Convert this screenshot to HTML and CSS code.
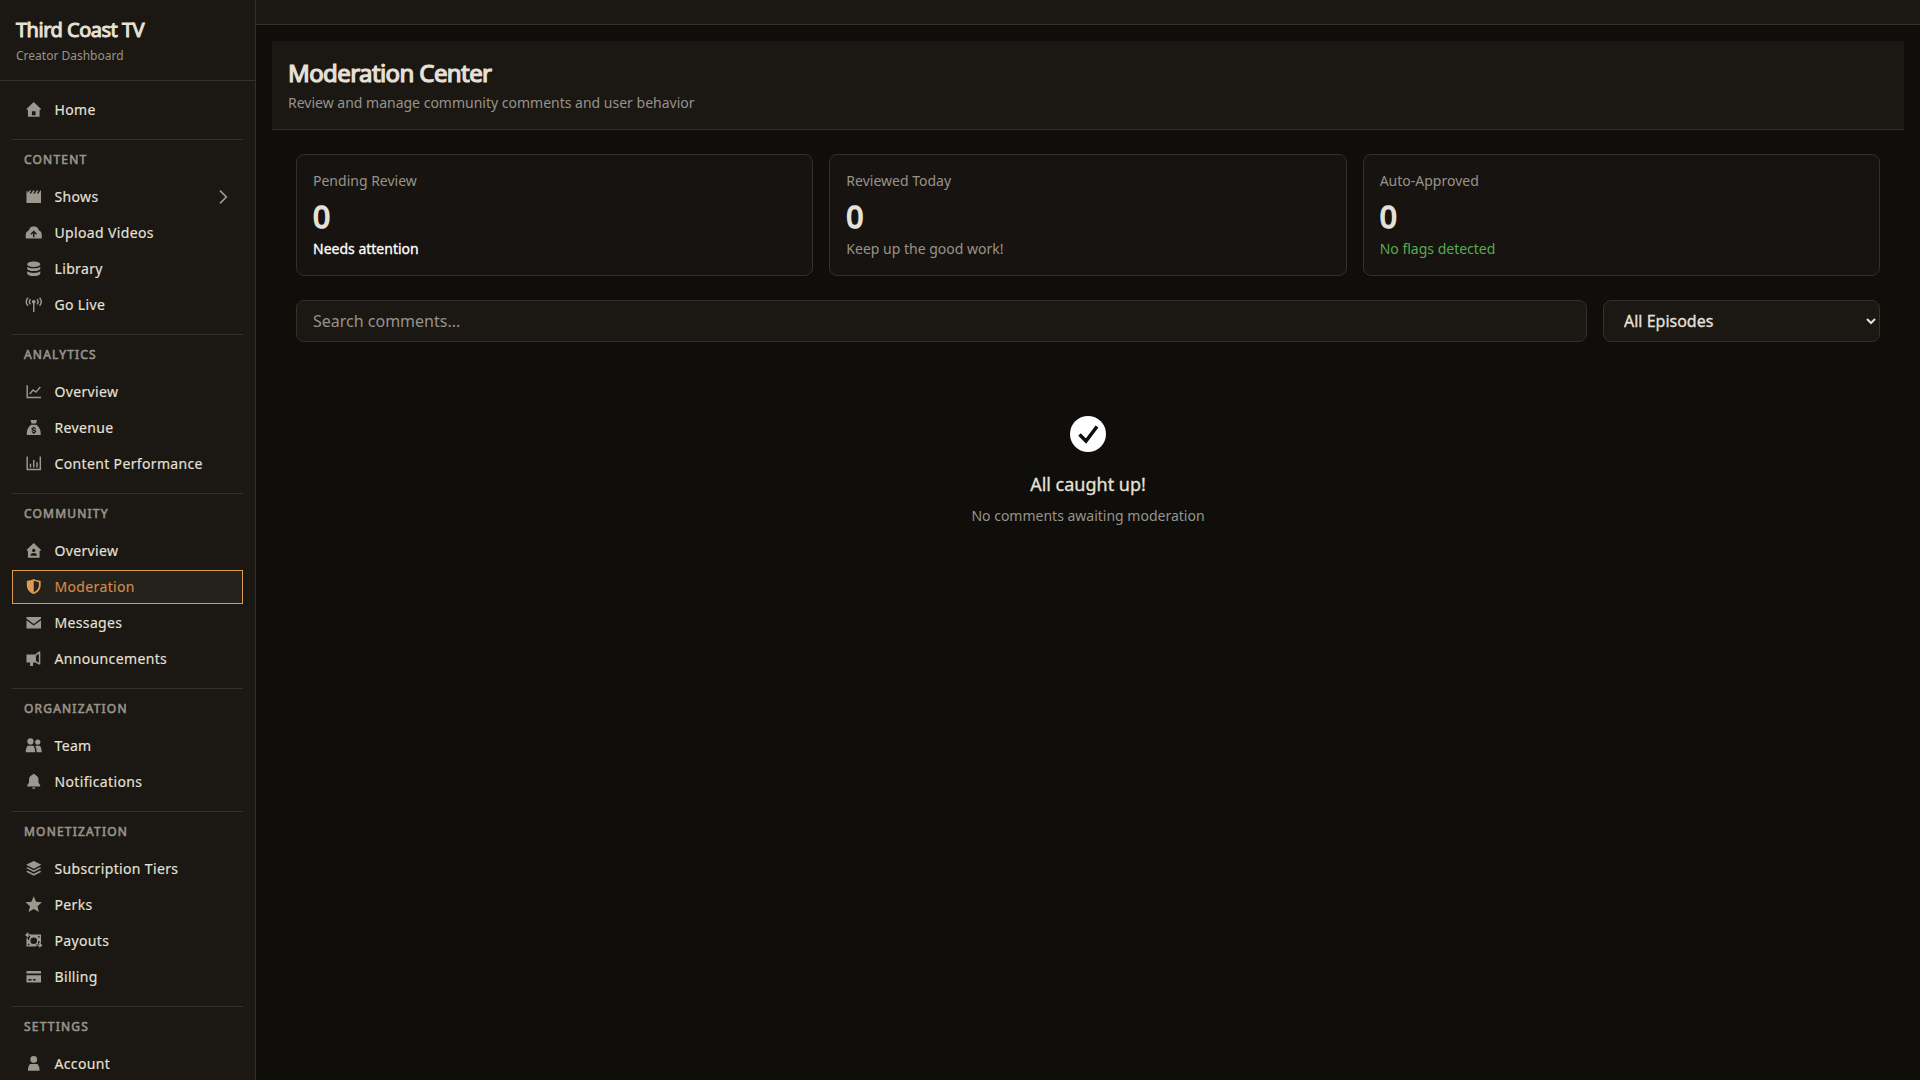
FILE: index.html
```html
<!DOCTYPE html>
<html lang="en">

<head>
    <meta charset="UTF-8">
    <title>Moderation Center - Third Coast TV</title>
    <link rel="stylesheet" href="styles.css">
</head>

<body>
    <aside class="sidebar">
        <header class="brand">
            <h2>Third Coast TV</h2>
            <p>Creator Dashboard</p>
        </header>

        <nav>
            <section class="group">
                <a href="#" class="item">
                    <svg viewBox="0 0 24 24"><path fill-rule="evenodd" d="M12 1.500 22 11l-1.200 1.300-.8-.6V21.500H4v-9.800l-.8.600L2 11ZM9.500 14v5.500h5V14Z"/></svg>
                    Home</a>
            </section>

            <section class="group">
                <h3>Content</h3>
                <a href="#" class="item">
                    <svg viewBox="0 0 24 24"><path d="M2 4.500h1.500V7L6 3.500h2.500L6.200 7.500h2.300L11 3.500h2.500l-2.300 4h2.300L16 3.500h2.500l-2.300 4h2.300L21 3.500h1V20.500H2Z"/></svg>
                    Shows
                    <svg class="chevron" viewBox="0 0 24 24"><path d="m7.500 2.500 9.500 9.500-9.500 9.500"/></svg>
                </a>
                <a href="#" class="item">
                    <svg viewBox="0 0 24 24"><path fill-rule="evenodd" d="M7 5c2-2.200 8-2.200 10.200 0l2 4C21.500 9.800 23 12 23 15v5H1v-5c0-3 1.500-5 4-6Zm5 4-4.500 4.500 1.200 1.200 2.300-2V18h2v-5.300l2.300 2 1.200-1.200Z"/></svg>
                    Upload Videos</a>
                <a href="#" class="item">
                    <svg viewBox="0 0 24 24"><path d="M12 2c5 0 9 1.800 9 3.800S17 9.600 12 9.600 3 7.800 3 5.800 7 2 12 2ZM3 9.200c2 1.600 5.400 2.200 9 2.200s7-.6 9-2.200v2.400c0 2-4 3.600-9 3.600s-9-1.600-9-3.600ZM3 15.500c2 1.600 5.400 2.200 9 2.200s7-.6 9-2.200V18c0 2.200-4 4-9 4s-9-1.800-9-4Z"/></svg>
                    Library</a>
                <a href="#" class="item">
                    <svg viewBox="0 0 24 24"><path d="M12 5.500a2.500 2.500 0 0 1 1 4.800V22h-2V10.300a2.500 2.500 0 0 1 1-4.800Z"/><path class="line" d="M4 2.500c-2.700 3.200-2.700 7.800 0 11M20 2.500c2.700 3.200 2.700 7.800 0 11M7.500 4.500c-1.700 2-1.700 5 0 7M16.500 4.500c1.700 2 1.700 5 0 7"/></svg>
                    Go Live</a>
            </section>

            <section class="group">
                <h3>Analytics</h3>
                <a href="#" class="item">
                    <svg viewBox="0 0 24 24"><path class="line" d="M3 3v17h19M6.500 15l4.500-5.500 4 3 6-7"/></svg>
                    Overview</a>
                <a href="#" class="item">
                    <svg viewBox="0 0 24 24"><path fill-rule="evenodd" d="M7.500 1.500h9L15 6.200H9ZM8.500 8h7c3.500 2.500 6 6.500 6 10.500V22h-19v-3.500c0-4 2.500-8 6-10.500Zm2.700 2.500v1.200c-3 .4-3.200 3.800-.2 4.300l1.800.4c.9.300.7 1.300-.4 1.300-1 0-1.600-.3-1.700-1H9c.1 1.400.9 2.200 2.200 2.500v1.200h1.600v-1.200c3.200-.5 3.400-3.900.3-4.500l-1.700-.4c-.9-.3-.6-1.200.5-1.200.8 0 1.300.3 1.500.9h1.600c-.2-1.200-1-2-2.200-2.300v-1.200Z"/></svg>
                    Revenue</a>
                <a href="#" class="item">
                    <svg viewBox="0 0 24 24"><path class="line" d="M3 2v18h18V2M7.500 17v-5M12 17V7M16.500 17v-7"/></svg>
                    Content Performance</a>
            </section>

            <section class="group">
                <h3>Community</h3>
                <a href="#" class="item">
                    <svg viewBox="0 0 24 24"><path fill-rule="evenodd" d="M12 1.500 22 11l-1.200 1.300-.8-.6V21.500H4v-9.800l-.8.600L2 11ZM12 9.200a2.300 2.300 0 1 0 0 4.600 2.300 2.300 0 0 0 0-4.600ZM7.500 19h9c0-2.400-1.500-4-4.500-4s-4.500 1.600-4.500 4Z"/></svg>
                    Overview</a>
                <a href="#" class="item valgt">
                    <svg viewBox="0 0 24 24"><path fill-rule="evenodd" d="M12 1.500c3 1.500 6 2.200 9.500 2.500v6c0 6-4 10-9.500 12-5.500-2-9.500-6-9.500-12V4C6 3.700 9 3 12 1.500Zm0 2.400v15.600c4.300-1.700 7-5 7-9.100V5.900C16.500 5.500 14.200 4.800 12 3.900Z"/></svg>
                    Moderation</a>
                <a href="#" class="item">
                    <svg viewBox="0 0 24 24"><path d="M2 4h20v2.300l-10 7.400L2 6.300Zm0 4.500 10 7.300 10-7.300V20H2Z"/></svg>
                    Messages</a>
                <a href="#" class="item">
                    <svg viewBox="0 0 24 24"><path fill-rule="evenodd" d="M21 2v18h-2l-5-3h-3v5H7v-5H2V6h12l5-4Zm-2 3.200-4 2.600v7.400l4 2.300Z"/></svg>
                    Announcements</a>
            </section>

            <section class="group">
                <h3>Organization</h3>
                <a href="#" class="item">
                    <svg viewBox="0 0 24 24"><circle cx="7.500" cy="6" r="4.300"/><circle cx="17.500" cy="7" r="3.600"/><path d="M3.500 12h8c1.500 1.800 2.500 5 2.500 9H1c0-4 1-7.200 2.500-9ZM14 12h6.500c1.500 1.800 2.500 5 2.500 9h-7c0-3.800-.7-6.500-2-9Z"/></svg>
                    Team</a>
                <a href="#" class="item">
                    <svg viewBox="0 0 24 24"><path d="M12 1c.8 0 1.400.5 1.500 1.300 3 .7 5 3.400 5 6.700v4c1 1.700 2.500 3 2.500 5.500H3c0-2.500 1.500-3.800 2.500-5.500V9c0-3.300 2-6 5-6.700C10.600 1.500 11.200 1 12 1ZM9.500 20h5c-.3 1.200-1.300 2-2.500 2s-2.200-.8-2.500-2Z"/></svg>
                    Notifications</a>
            </section>

            <section class="group">
                <h3>Monetization</h3>
                <a href="#" class="item">
                    <svg viewBox="0 0 24 24"><path d="m12 1.500 10.500 5L12 12 1.500 6.500ZM1.500 11l2.200-1.200L12 14l8.300-4.200 2.200 1.200L12 16.500Zm0 5 2.200-1.200L12 19l8.300-4.200L22.500 16 12 21.500Z"/></svg>
                    Subscription Tiers</a>
                <a href="#" class="item">
                    <svg viewBox="0 0 24 24"><path d="m12 .5 3.200 7.500 8 .7-6 5.300L19 22l-7-4.200L5 22l1.800-8-6-5.300 8-.7Z"/></svg>
                    Perks</a>
                <a href="#" class="item">
                    <svg viewBox="0 0 24 24"><path fill-rule="evenodd" d="M7 3.500h15V15h-2v-2.500h-1.500a6 6 0 0 0-.5 4h-3V20H2V8.500h2V11h1.500A6 6 0 0 0 6 7.500h1ZM12 7.500a4.500 4.500 0 1 0 0 9 4.500 4.500 0 0 0 0-9ZM18 5.500v2h2v-2ZM4 16v2h2v-2Z"/><path class="line" d="M4.500 1 1.500 4l3 3M1.500 4H8M19.500 15l3 3-3 3M22.500 18H15"/></svg>
                    Payouts</a>
                <a href="#" class="item">
                    <svg viewBox="0 0 24 24"><path fill-rule="evenodd" d="M2 4h20v3.500H2Zm0 6h20v10H2Zm2.500 5v2H9v-2Zm6.500 0v2h3.500v-2Z"/></svg>
                    Billing</a>
            </section>

            <section class="group">
                <h3>Settings</h3>
                <a href="#" class="item">
                    <svg viewBox="0 0 24 24"><circle cx="12" cy="6" r="4.700"/><path d="M7 12.500h10c2 2 3 5 3 9H4c0-4 1-7 3-9Z"/></svg>
                    Account</a>
            </section>
        </nav>
    </aside>

    <main>
        <div class="topbar"></div>
        <div class="page">
            <header class="page-header">
                <h1>Moderation Center</h1>
                <p>Review and manage community comments and user behavior</p>
            </header>

            <div class="content">
                <section class="stats">
                    <article class="card">
                        <p>Pending Review</p>
                        <strong>0</strong>
                        <p class="attention">Needs attention</p>
                    </article>
                    <article class="card">
                        <p>Reviewed Today</p>
                        <strong>0</strong>
                        <p>Keep up the good work!</p>
                    </article>
                    <article class="card">
                        <p>Auto-Approved</p>
                        <strong>0</strong>
                        <p class="ok">No flags detected</p>
                    </article>
                </section>

                <form class="filters">
                    <input type="text" placeholder="Search comments...">
                    <select>
                        <option>All Episodes</option>
                    </select>
                </form>

                <section class="empty">
                    <svg viewBox="0 0 36 36"><circle cx="18" cy="18" r="18"/><path d="m9.500 18.500 6.500 6.500L27 10.500"/></svg>
                    <h2>All caught up!</h2>
                    <p>No comments awaiting moderation</p>
                </section>
            </div>
        </div>
    </main>
</body>

</html>
```
FILE: styles.css
```css
* {
    box-sizing: border-box;
    margin: 0;
    padding: 0;
}

body {
    display: flex;
    height: 100vh;
    overflow: hidden;
    background-color: #0f0e0a;
    color: #e6e1d8;
    font-family: "Noto Sans", sans-serif;
    font-size: 14px;
    line-height: 20px;
}

/* headings use the regular cut, thickened with a stroke */
h1,
h2,
h3,
strong {
    font-weight: 400;
}

/* sidebar */
.sidebar {
    flex: none;
    width: 256px;
    height: 100vh;
    overflow: hidden;
    background-color: #1b1713;
    border-right: 1px solid #33312c;
}

.brand {
    height: 81px;
    padding: 16px;
    border-bottom: 1px solid #33312c;
}

.brand h2 {
    font-size: 20px;
    line-height: 28px;
    letter-spacing: -0.5px;
    -webkit-text-stroke: 1px #e6e1d8;
}

.brand p {
    margin-top: 4px;
    font-size: 12px;
    line-height: 16px;
    color: #97938a;
}

nav {
    padding: 12px;
}

.group {
    display: flex;
    flex-direction: column;
    gap: 2px;
}

.group + .group {
    margin-top: 12px;
    border-top: 1px solid #33312c;
}

.group h3 {
    padding: 12px 12px 10px;
    font-size: 12px;
    line-height: 16px;
    letter-spacing: 1.2px;
    text-transform: uppercase;
    color: #97938a;
    -webkit-text-stroke: 0.6px #97938a;
}

.item {
    display: flex;
    align-items: center;
    gap: 12px;
    height: 34px;
    padding: 0 12px;
    border: 1px solid transparent;
    color: #e6e1d8;
    letter-spacing: 0.35px;
    -webkit-text-stroke: 0.15px;
    text-decoration: none;
}

.item svg {
    flex: none;
    width: 17.500px;
    height: 17.500px;
    fill: #9c988e;
}

.item .line,
.item .chevron {
    fill: none;
    stroke: #9c988e;
    stroke-width: 2;
}

.item .chevron {
    width: 16px;
    height: 16px;
    margin-left: auto;
    margin-right: -1px;
    stroke-width: 2.500;
}

.valgt {
    background-color: #25211b;
    border-color: #dc9a55;
    color: #d28a48;
}

.valgt svg {
    fill: #dc9a55;
}

/* main */
main {
    flex: 1;
}

.topbar {
    height: 25px;
    background-color: #1b1713;
    border-bottom: 1px solid #33312c;
}

.page {
    padding: 16px;
}

.page-header {
    height: 89px;
    padding: 16px;
    background-color: #1b1713;
    border-bottom: 1px solid #33312c;
}

.page-header h1 {
    font-size: 24px;
    line-height: 32px;
    letter-spacing: -0.6px;
    -webkit-text-stroke: 1.2px #e6e1d8;
}

.page-header p {
    margin-top: 4px;
    color: #97938a;
}

.content {
    padding: 24px;
}

.stats {
    display: grid;
    grid-template-columns: repeat(3, 1fr);
    gap: 16px;
}

.card {
    height: 122px;
    padding: 16px;
    background-color: #171310;
    border: 1px solid #33312c;
    border-radius: 8px;
}

.card p {
    color: #97938a;
}

.card strong {
    display: block;
    padding-top: 6px;
    margin-bottom: 2px;
    font-size: 30px;
    line-height: 40px;
    -webkit-text-stroke: 1.6px #e6e1d8;
}

.card .attention {
    color: #fff;
    -webkit-text-stroke: 0.3px #fff;
}

.card .ok {
    color: #55ad50;
}

.filters {
    display: flex;
    gap: 16px;
    margin-top: 24px;
}

.filters input,
.filters select {
    height: 42px;
    padding: 0 16px;
    background-color: #1b1713;
    border: 1px solid #33312c;
    border-radius: 8px;
    color: #e6e1d8;
    font-family: inherit;
    font-size: 16px;
}

.filters input {
    flex: 1;
}

.filters input::placeholder {
    color: #97938a;
}

.filters select {
    width: 277px;
    -webkit-text-stroke: 0.3px #e6e1d8;
}

.empty {
    display: flex;
    flex-direction: column;
    align-items: center;
    padding-top: 74px;
}

.empty svg {
    width: 36px;
    height: 36px;
    fill: #fff;
}

.empty path {
    fill: none;
    stroke: #0f0e0a;
    stroke-width: 3.500;
}

.empty h2 {
    margin-top: 18px;
    font-size: 18px;
    line-height: 28px;
    -webkit-text-stroke: 0.3px #e6e1d8;
}

.empty p {
    margin-top: 8px;
    color: #97938a;
}
```
